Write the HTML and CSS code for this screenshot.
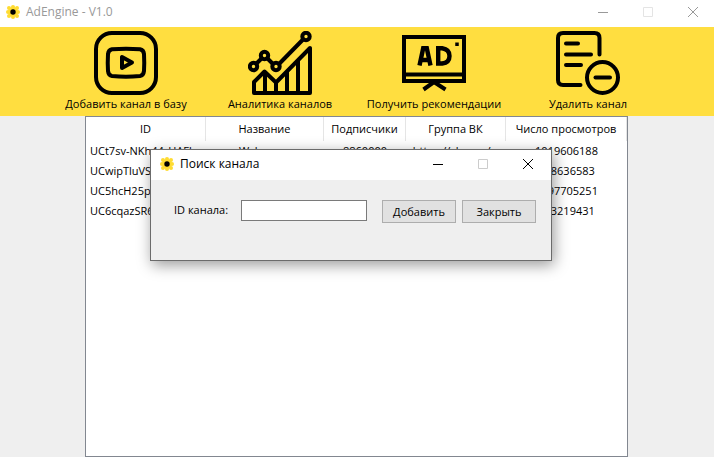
FILE: index.html
```html
<!DOCTYPE html>
<html lang="ru">
<head>
<meta charset="utf-8">
<title>AdEngine - V1.0</title>
<link rel="stylesheet" href="styles.css">
</head>
<body>
<svg width="0" height="0" class="defs" aria-hidden="true">
  <symbol id="flower" viewBox="0 0 16 16">
    <g fill="#ffdc32">
      <circle cx="8" cy="8" r="5"/>
      <circle cx="8" cy="3" r="2"/><circle cx="8" cy="13" r="2"/>
      <circle cx="3" cy="8" r="2"/><circle cx="13" cy="8" r="2"/>
      <circle cx="4" cy="4" r="2"/><circle cx="12" cy="4" r="2"/>
      <circle cx="4" cy="12" r="2"/><circle cx="12" cy="12" r="2"/>
    </g>
    <circle cx="8" cy="8" r="2.700" fill="#000"/>
  </symbol>
  <symbol id="minimize" viewBox="0 0 12 12"><path d="M1 6.500h10" stroke="currentColor"/></symbol>
  <symbol id="maximize" viewBox="0 0 12 12"><path d="M1.500 1.500h9v9h-9z" fill="none" stroke="currentColor"/></symbol>
  <symbol id="close" viewBox="0 0 12 12"><path d="M1 1l10 10M11 1L1 11" stroke="currentColor" stroke-width="1"/></symbol>
</svg>

<header class="titlebar">
  <svg class="app-icon"><use href="#flower"/></svg>
  <h1 class="caption">AdEngine - V1.0</h1>
  <div class="controls">
    <button aria-label="Свернуть"><svg><use href="#minimize"/></svg></button>
    <button aria-label="Развернуть" disabled><svg><use href="#maximize"/></svg></button>
    <button aria-label="Закрыть окно"><svg><use href="#close"/></svg></button>
  </div>
</header>

<nav class="toolbar">
  <button class="tool">
    <svg viewBox="0 0 64 64" fill="none" stroke="#000" stroke-linejoin="round">
      <rect x="2" y="2" width="60" height="60" rx="16" stroke-width="4"/>
      <path d="M18 18.300Q32 17 46 18.300Q49.600 19 50 23Q50.500 32 50 40Q49.500 44.500 46 45Q32 46.500 18 45Q14.500 44.500 14 40Q13.500 32 14 23Q14.500 19 18 18.300Z" stroke-width="4"/>
      <path d="M28 26v11l10-5.500z" stroke-width="4"/>
    </svg>
    <span>Добавить канал в базу</span>
  </button>
  <button class="tool">
    <svg viewBox="0 0 64 64" fill="none" stroke="#000" stroke-width="4" stroke-linejoin="round">
      <circle cx="5.500" cy="35.500" r="3.700"/><circle cx="16.500" cy="24.500" r="3.700"/>
      <circle cx="28" cy="35.500" r="3.700"/><circle cx="58" cy="5.500" r="3.700"/>
      <path d="M8 33l6-6M19 27l6 6M31 33L55.500 8"/>
      <path d="M6 62V51L16.500 40.500 28 51.500 62 17v45zM17 41v21M28 51v11M39 41v21M50 30v32"/>
    </svg>
    <span>Аналитика каналов</span>
  </button>
  <button class="tool">
    <svg viewBox="0 0 64 64" fill="none" stroke="#000" stroke-width="4">
      <path d="M2 6h60v44H2zM2 43.500h60"/>
      <path d="M21.500 58.500L32 51l11.500 7.500"/>
      <path d="M17.500 34.500l3.700-17.300h3.600l3.700 17.300M19 29h8" stroke-width="4.400"/>
      <path d="M36.200 17.200v15.300h4q7.300-1 7.300-7.600t-7.300-7.700z" stroke-width="4.400"/>
      <path d="M55 11.500v3.500" stroke-width="3.500"/>
    </svg>
    <span>Получить рекомендации</span>
  </button>
  <button class="tool">
    <svg viewBox="0 0 64 64" fill="none" stroke="#000" stroke-width="4" stroke-linecap="round">
      <path d="M43.500 23.500V7q0-5-5-5H7Q2 2 2 7v42q0 5 5 5h17.500"/>
      <path d="M10 12.500h12M10 23.500h25M10 34h15"/>
      <circle cx="46.500" cy="46.500" r="15.500"/><path d="M39.500 46.500h14.500"/>
    </svg>
    <span>Удалить канал</span>
  </button>
</nav>

<main class="content">
  <table class="channels">
    <colgroup><col class="c-id"><col class="c-name"><col class="c-subs"><col class="c-group"><col></colgroup>
    <thead>
      <tr><th>ID</th><th>Название</th><th>Подписчики</th><th>Группа ВК</th><th>Число просмотров</th></tr>
    </thead>
    <tbody>
      <tr><td>UCt7sv-NKh44rHAFh</td><td>Wylsacom</td><td>8860000</td><td>https://vk.com/w</td><td>1019606188</td></tr>
      <tr><td>UCwipTluVS</td><td></td><td></td><td></td><td>318636583</td></tr>
      <tr><td>UC5hcH25p</td><td></td><td></td><td></td><td>1197705251</td></tr>
      <tr><td>UC6cqazSR6</td><td></td><td></td><td></td><td>353219431</td></tr>
    </tbody>
  </table>
</main>

<section class="dialog" role="dialog" aria-labelledby="dialog-title">
  <header class="titlebar dialog-bar">
    <svg class="app-icon"><use href="#flower"/></svg>
    <h2 class="caption" id="dialog-title">Поиск канала</h2>
    <div class="controls">
      <button aria-label="Свернуть"><svg><use href="#minimize"/></svg></button>
      <button aria-label="Развернуть" disabled><svg><use href="#maximize"/></svg></button>
      <button aria-label="Закрыть диалог"><svg><use href="#close"/></svg></button>
    </div>
  </header>
  <form class="search">
    <label for="channel-id">ID канала:</label>
    <input id="channel-id" type="text">
    <div class="actions">
      <button type="button">Добавить</button>
      <button type="button">Закрыть</button>
    </div>
  </form>
</section>
</body>
</html>
```
FILE: styles.css
```css
* { box-sizing: border-box; }

body {
  margin: 0;
  min-height: 100vh;
  display: flex;
  flex-direction: column;
  background: #efefef;
  color: #000;
  font: 11px/16px "Open Sans", "Noto Sans", sans-serif;
}

button, input { font: inherit; color: inherit; }
.defs { position: absolute; }

.titlebar {
  display: flex;
  align-items: center;
  height: 27px;
  padding: 0 0 4px 5px;
  gap: 5px;
  background: #fff;
  color: #999;
}
.app-icon { width: 16px; height: 16px; }
.caption { margin: 0; font-size: 12px; font-weight: 400; }
.controls { display: flex; gap: 3px; margin-left: auto; }
.controls button {
  display: grid;
  place-items: center;
  width: 42px;
  height: 22px;
  padding: 0;
  border: 0;
  background: none;
}
.controls svg { width: 12px; height: 12px; }
.controls button:disabled { color: #e4e4e4; }

.toolbar {
  display: grid;
  grid-template-columns: repeat(4, 1fr);
  padding: 4px 49px 4px 49px;
  background: #ffde40;
}
.tool {
  display: flex;
  flex-direction: column;
  align-items: center;
  gap: 1px;
  padding: 0;
  border: 0;
  background: none;
  white-space: nowrap;
}
.tool svg { width: 64px; height: 64px; }

.content {
  flex: 1;
  margin: 0 86px 0 85px;
  border: 1px solid #828790;
  background: #fff;
}
.channels {
  width: 100%;
  table-layout: fixed;
  border-spacing: 0;
  white-space: nowrap;
}
.c-id { width: 120px; }
.c-name { width: 118px; }
.c-subs { width: 82px; }
.c-group { width: 100px; }
.channels th {
  height: 24px;
  padding: 0;
  border-right: 1px solid #e5e5e5;
  font-weight: 400;
}
.channels td {
  height: 20px;
  padding: 0 4px;
  overflow: hidden;
  text-align: center;
}
.channels td:first-child { text-align: left; }

.dialog {
  position: absolute;
  left: 150px;
  top: 149px;
  width: 402px;
  border: 1px solid #6b6b6b;
  background: #efefef;
  box-shadow: 2px 4px 14px rgba(0, 0, 0, 0.4);
}
.dialog-bar {
  height: 30px;
  padding: 0 2px 2px 8px;
  color: #000;
}
.dialog-bar .controls button:disabled { color: #ccc; }
.search {
  display: flex;
  align-items: flex-start;
  padding: 20px 15px 37px 23px;
}
.search label { width: 67px; padding-top: 2px; }
.search input {
  flex: 1;
  min-width: 0;
  height: 21px;
  padding: 0 4px;
  border: 1px solid #7a7a7a;
  background: #fff;
}
.actions { display: flex; gap: 6px; margin-left: 15px; }
.actions button {
  width: 74px;
  height: 23px;
  padding: 0;
  border: 1px solid #adadad;
  background: #e1e1e1;
}
```
